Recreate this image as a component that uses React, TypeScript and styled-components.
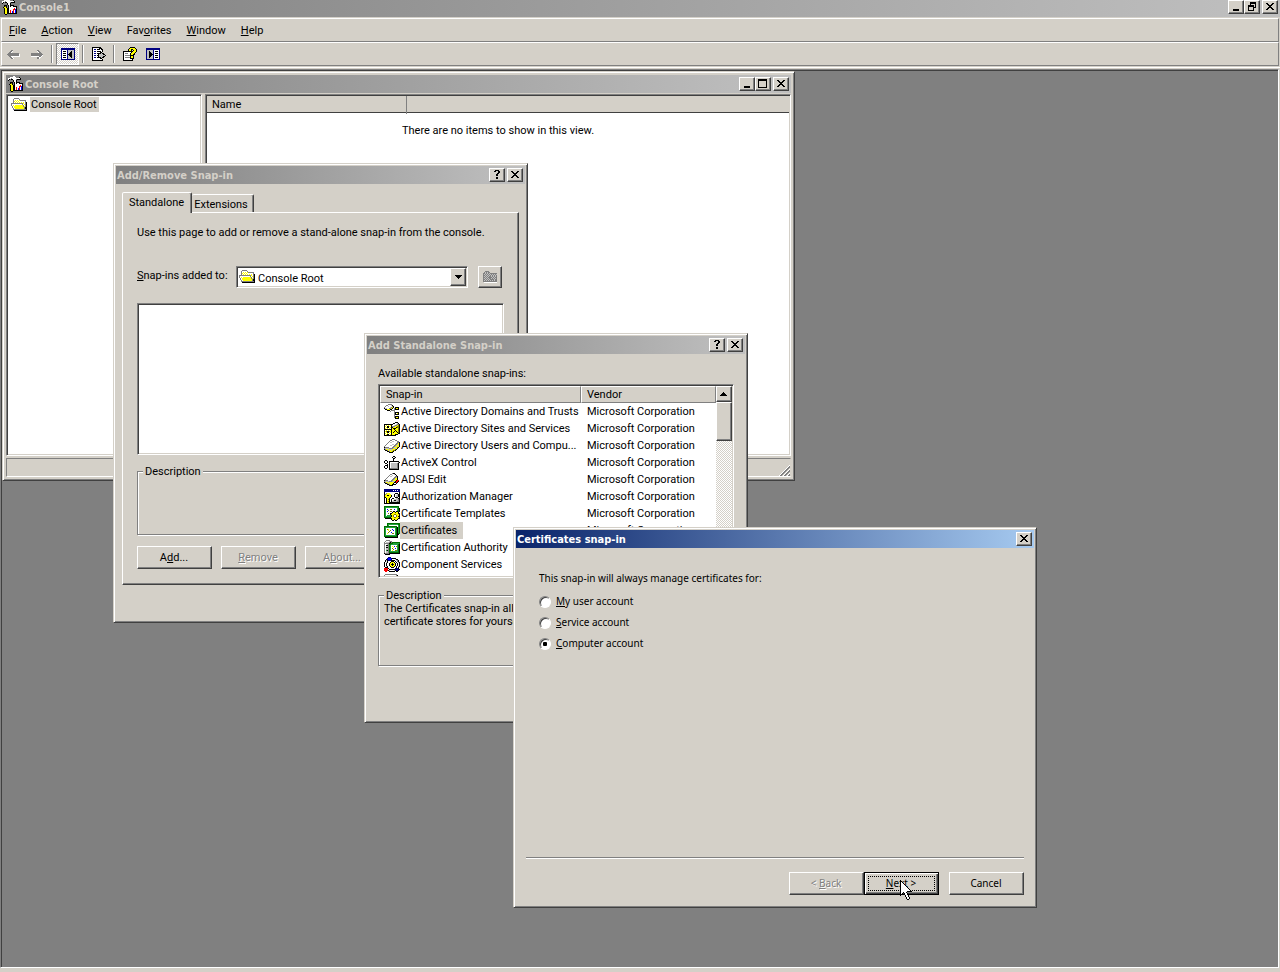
import React, { ReactNode } from 'react';
import styled, { createGlobalStyle, css } from 'styled-components';

const face = '#d4d0c8';
const light = '#ffffff';
const shadow = '#808080';
const dark = '#404040';
const uiFont = 'Roboto, "Liberation Sans", sans-serif';
const titleFont = '"DejaVu Sans Condensed", "DejaVu Sans", sans-serif';
const wizardFont = '"Noto Sans", "Liberation Sans", sans-serif';

const raised = css`
  border: 1px solid;
  border-color: ${light} ${dark} ${dark} ${light};
  box-shadow: inset -1px -1px ${shadow};
`;
const sunken = css`
  border: 1px solid;
  border-color: ${shadow} ${light} ${light} ${shadow};
  box-shadow: inset 1px 1px ${dark}, inset -1px -1px ${face};
  padding: 1px;
`;
const checker = css`
  background: repeating-conic-gradient(${light} 0 25%, ${face} 0 50%) 0 0 / 2px 2px;
`;

const GlobalStyle = createGlobalStyle`
  *, *::before, *::after { box-sizing: border-box; }
  body { margin: 0; background: ${face}; overflow: hidden; }
  body, button, select, input, table { font: 11px/13px ${uiFont}; color: #000; }
  button { padding: 0; }
  p { margin: 0; }
  svg { display: block; flex: none; }
`;

/* ---------- pixel icons ---------- */

const palette: Record<string, string> = {
  k: '#000000', g: '#808080', l: '#c0c0c0', w: '#ffffff', y: '#ffff00', o: '#808000',
  b: '#0000ff', n: '#000080', r: '#ff0000', m: '#800080', e: '#007000', f: '#20a040', t: '#404040',
};

function Pixels({ rows }: { rows: string[] }) {
  const width = Math.max(...rows.map((r) => r.length));
  return (
    <svg width={width} height={rows.length} shapeRendering="crispEdges" aria-hidden="true">
      {rows.flatMap((row, y) =>
        (row.match(/(.)\1*/g) ?? []).reduce<{ x: number; out: ReactNode[] }>(
          (acc, run) => {
            if (palette[run[0]]) {
              acc.out.push(<rect key={`${acc.x}-${y}`} x={acc.x} y={y} width={run.length} height={1} fill={palette[run[0]]} />);
            }
            return { x: acc.x + run.length, out: acc.out };
          },
          { x: 0, out: [] },
        ).out,
      )}
    </svg>
  );
}

const consoleIcon = [
  '...gggwwg.......',
  '.ggwwwwwwgggk...',
  'gwwwgwwwwwwwwk..',
  'gwk.kkwwwgkkkk..',
  '.k....kwwk......',
  '......kwwk......',
  '...kkk.kwkkkk...',
  '...kok.kwkwwkkkk',
  '..kyyk.kwwwwwwwk',
  '...kyykkwwwwwrwk',
  '...kyykkwwwwrrbk',
  '...kyykkwrwwrwbk',
  '...kyykkwrwbrwbk',
  '...kyykkwrwbrwbk',
  '...kyykkkkkkkkkk',
  '....kk..........',
];
const folderIcon = [
  '...ggggg........',
  '..gwwwwwg.......',
  '..gwywywygggggg.',
  '..gywywywwwwwwg.',
  '..gwywywywywywgk',
  'ggggggggggggywgk',
  'gwwwwwwwwwwgwygk',
  'gwywyyyyyyyygwgk',
  '.gwyyyyyyyyygygk',
  '.gwyyyyyyyyyygkk',
  '..gwyyyyyyyyygkk',
  '..gggggggggggggk',
  '...kkkkkkkkkkkkk',
];
const grayFolder = [
  '..gggg........',
  '.glglgg.......',
  'gglglglggggggg',
  'glglglglglglgl',
  'gglglglglglglg',
  'glglglgglglglg',
  'gglglgggglglgg',
  'glglglgglglglg',
  'gglglglgggglgg',
  'glglglglglglgg',
  'gggggggggggggg',
  '.wwwwwwwwwwwww',
];
const arrowLeft = [
  '....gg.......',
  '...ggw.......',
  '..ggw........',
  '.ggggggggggg.',
  'ggggggggggggw',
  '.gggggggggggw',
  '..ggwwwwwwwww',
  '...ggw.......',
  '....ggw......',
];
const arrowRight = [
  '.......gg....',
  '.......wgg...',
  '........wgg..',
  '.ggggggggggg.',
  '.gggggggggggg',
  '.gggggggggggw',
  '.wwwwwwwwggw.',
  '.......ggww..',
  '.......ggw...',
];
const treePaneIcon = [
  'nnnnnnnnnnnnnn',
  'nnnnnnnnnnnnnn',
  'nwwwwwnlllllln',
  'nwkkkwnlllklln',
  'nwwwwwnllkklln',
  'nwkkkwnlkkklln',
  'nwwwwwnkkkklln',
  'nwkkkwnlkkklln',
  'nwwwwwnllkklln',
  'nwkkkwnlllklln',
  'nwwwwwnlllllln',
  'nnnnnnnnnnnnnn',
];
const actionPaneIcon = [
  'nnnnnnnnnnnnnn',
  'nnnnnnnnnnnnnn',
  'nllllllnwwwwwn',
  'nllklllnwkkkwn',
  'nllkkllnwwwwwn',
  'nllkkklnwkkkwn',
  'nllkkkknwwwwwn',
  'nllkkklnwkkkwn',
  'nllkkllnwwwwwn',
  'nllklllnwkkkwn',
  'nllllllnwwwwwn',
  'nnnnnnnnnnnnnn',
];
const exportIcon = [
  'kkkkkkkkk.....',
  'kwwwwwwkkk....',
  'kwnnwkkkwkk...',
  'kwwwwwwwwwk...',
  'kwnnwkkkkwk...',
  'kwwwwwwwkk....',
  'kwnnwkkkklkk..',
  'kwwwwwkllllkk.',
  'kwnnwkkllllllk',
  'kwwwwwkllllkk.',
  'kwnnwkkkklkk..',
  'kwwwwwwwkk....',
  'kwwwwwwwwwk...',
  'kkkkkkkkkkk...',
];
const helpIcon = [
  '.......kkkkk..',
  '......kyyyyyk.',
  '.....kyykkyyyk',
  '.....kyyk.kyyk',
  'kkkkkkkkkkyyyk',
  'kwwwwwwwkyyyk.',
  'kwgggwwkyyyk..',
  'kwwwwwwkyykk..',
  'kwgggggkkkk...',
  'kwwwwwwkyyk...',
  'kwgggggkyyk...',
  'kwwwwwwkkkk...',
  'kwwwwwwwwk....',
  'kkkkkkkkkk....',
];
const trustIcon = [
  '....gggg........',
  '..ggwwwlk.......',
  '.gwwlwwwgk......',
  'gwwwwwlgyk.kkkk.',
  'kllwwggyk.gkyyk.',
  '.kkyyykk..gkkkk.',
  '...kkk.gggg.....',
  '......g...g.....',
  '..........gkkkk.',
  '..........gkwyk.',
  '..........gkkkk.',
  '..........g.....',
  '..........gkkkk.',
  '..........gkyyk.',
  '...........kkkk.',
];
const sitesIcon = [
  '...........kkk..',
  '.........kkwwlk.',
  'kkkkkkkkkwwwlggk',
  'kwywywykwwlggyok',
  'kywkkywkgggyyook',
  'kwykkwykkyyykook',
  'kywywywkykkkyyok',
  'kkkkkkkkyykyyyok',
  'kwywywykyyykyyok',
  'kyokkoykyykykyok',
  'kwykkwykykyyykok',
  'kywywywkyyyyyykk',
  'kwykkwykyyykkk..',
  'kkkkkkkkkkkk....',
];
const usersIcon = [
  '........ggg.....',
  '......ggwwwgg...',
  '.....gwwllwwwgg.',
  '....gwllwwwwwggk',
  '...gwwwwwwwwggyk',
  '..gwwwwwllwgglyk',
  '.gwwwwllwwggyylk',
  'gwwwwwwwwggllyyk',
  'kggggwwwggyyyok.',
  'gllllgggglllyk..',
  'kgyylyllyyyok...',
  '.kkgylylyook....',
  '...kkgyyok......',
  '.....kkkk.......',
];
const activexIcon = [
  '.........kk.....',
  '........kwlk....',
  '.........kk.....',
  '.........k......',
  '.kk......k......',
  'kwwk.kkkkkkkkkk.',
  'kwwk.kwwwwwwwwgk',
  '.kk..kwllllllgk.',
  '...k.kwllllllgk.',
  '.kkk.kwllllllgk.',
  'kwwk.kwllllllgk.',
  'kwwk.kwllllllgk.',
  '.kk..kggggggggk.',
  '.....kkkkkkkkkk.',
];
const adsiIcon = [
  '........gkk.....',
  '......ggwwlk....',
  '.....gwwlwwwk...',
  '....gwllwwwggk..',
  '...gwwwwwwgglk..',
  '..gwwwwwwggyyk..',
  '.gwwwwwwgglyyk..',
  'kgggwwwggyyykrr.',
  'gllllggglllkrrk.',
  'kgyylyyyyykkrk..',
  '.kkgylyyykwwk...',
  '...kkgyykkkk....',
  '.....kkkk.......',
];
const authIcon = [
  'nnnnnnnnnnnnnnnn',
  'nnnnnnnnnwnwnwnn',
  'nnnnnnnnnnnnnnnn',
  'kwwwwwwwwwwwwwwk',
  'kwgyyywwwwwkkkwk',
  'kgyyyyywwwkwwlkk',
  'kyykkyykwwkwllkk',
  'kyyyyyykwwkwllkk',
  'kkyyyykwwwwkkkwk',
  'kwkyykwwkkwwllkk',
  'kwkyokwkwwllllgk',
  'kwkyykwkwlkkllgk',
  'kwkyokwklllllggk',
  'kwkyykkkkkkkkkkk',
  'kkkkkkkkkkkkkkkk',
];
const templateIcon = [
  'eeeeeeeeeeeeeee.',
  'efffffffffffffe.',
  'efwwwwwwwwwwwfek',
  'efwbwwoowwbwwfek',
  'efwwowwwwwwwwfek',
  'efwbwwoowkkwkkek',
  'efwwwwwwkyykyyk.',
  'efwwowkkyyyyyykk',
  'efwwwwkyyyooyyyk',
  'efwffffkyowwoyyk',
  'effffffkyowwoykk',
  'eeeeeekyyyooyyyk',
  '.kkkkkkkyyyyyykk',
  '.......kyykyyk..',
  '........kk.kk...',
];
const certIcon = [
  '...eeeeeeeeeeeee',
  '...effffffffffee',
  '...efwwwwwwwwwfe',
  'eeeeeeeeeeeeewfe',
  'efffffffffffekfe',
  'efwwwwwwwwwfekfe',
  'efwoywwwbwwfekfe',
  'efwwywowwbwfekfe',
  'efwwwowwwwwfekfe',
  'efwwowwbwwwfekfe',
  'efwywwwwoowfekee',
  'efwwwwwwwwwfekk.',
  'efffffffffffek..',
  'eeeeeeeeeeeeek..',
  '.kkkkkkkkkkkkk..',
];
const authorityIcon = [
  '..gggg..........',
  '.gwwwlgg........',
  'gwlllgkgeeeeeeee',
  'gggggkeeeffffffe',
  'gwwlgeefffffffek',
  'gwkkgefwwwwwwfek',
  'gwllgefwywbwofek',
  'gwkkgefwwywwwfek',
  'gwllgefwowwbwfek',
  'gwllgefwwowwwfek',
  'gwfkgefwywwoofek',
  'gwllgeffffffffek',
  'gwllgeeeeeeeeeek',
  'kggggkkkkkkkkkkk',
  '.kkkkk..........',
];
const componentIcon = [
  '....nnn.........',
  '...nbbbnkkkk....',
  '..knbbbnwwwlkk..',
  '.klknnnkkkkwlgk.',
  '.kwk...kkk.kwgk.',
  'kwlk..kyyyk.kwgk',
  'kwk..kyykyyk.kwk',
  'kwk..kykkkyk.kwk',
  'kwk..kyykyyk.kwk',
  'kwlk..kyyyk.kwgk',
  '.kkk...kkk..kwk.',
  'rrrrk......knnk.',
  'rrrrwkkkkkknnnnk',
  'rrrrklwwwwlknnk.',
  '.rr..kkkkkk.kk..',
];
const computerIcon = [
  '.gggggggggggg...',
  'gwwwwwwwwwwwgk..',
  'gwllllllllllgk..',
  'gwlkkkkkkkklgk..',
  'gwlknnnnnnklgk..',
  'gwlknnnnnnklgk..',
  'gwlknnnnnnklgk..',
  'gwlkkkkkkkklgk..',
  'gwllllllllllgk..',
  'gggggggggggggk..',
  '.kkkkkkkkkkkkk..',
  '.gwwwwwwwwwwwgk.',
  'gwllllllllllllgk',
  'ggggggggggggggkk',
  'kkkkkkkkkkkkkkk.',
];
const upGlyph = ['...k...', '..kkk..', '.kkkkk.', 'kkkkkkk'];
const downGlyph = ['kkkkkkk', '.kkkkk.', '..kkk..', '...k...'];
const closeGlyph = ['kk....kk', '.kk..kk.', '..kkkk..', '...kk...', '..kkkk..', '.kk..kk.', 'kk....kk'];
const minGlyph = ['......', '......', '......', '......', '......', '......', 'kkkkkk', 'kkkkkk'];
const maxGlyph = ['kkkkkkkkk', 'kkkkkkkkk', 'k.......k', 'k.......k', 'k.......k', 'k.......k', 'k.......k', 'k.......k', 'kkkkkkkkk'];
const restoreGlyph = ['..kkkkkk', '..kkkkkk', '..k....k', 'kkkkkk.k', 'kkkkkk.k', 'k....kkk', 'k....k..', 'k....k..', 'kkkkkk..'];
const helpGlyph = ['.kkkk.', 'kk..kk', '....kk', '...kk.', '..kk..', '..kk..', '......', '..kk..', '..kk..'];
const gripGlyph = [
  '...........w',
  '..........wg',
  '.........wgg',
  '........wgg.',
  '.......wgg.w',
  '......wgg.wg',
  '.....wgg.wgg',
  '....wgg.wgg.',
  '...wgg.wgg.w',
  '..wgg.wgg.wg',
  '.wgg.wgg.wgg',
];
const cursorGlyph = [
  'k...........',
  'kk..........',
  'kwk.........',
  'kwwk........',
  'kwwwk.......',
  'kwwwwk......',
  'kwwwwwk.....',
  'kwwwwwwk....',
  'kwwwwwwwk...',
  'kwwwwwwwwk..',
  'kwwwwwwwwwk.',
  'kwwwwwwkkkkk',
  'kwwkwwk.....',
  'kwk.kwwk....',
  'kk..kwwk....',
  'k....kwwk...',
  '.....kwwk...',
  '......kwwk..',
  '......kwwk..',
  '.......kk...',
];

/* ---------- shared parts ---------- */

const CaptionBar = styled.header<{ $active?: boolean }>`
  display: flex;
  align-items: center;
  height: 18px;
  flex: none;
  padding: 0 2px 0 1px;
  gap: 2px;
  font: bold 11px/14px ${titleFont};
  color: ${(p) => (p.$active ? '#fff' : face)};
  background: ${(p) =>
    p.$active ? 'linear-gradient(90deg, #0a246a, #a6caf0)' : `linear-gradient(90deg, ${shadow}, #c0c0c0)`};
`;
const CaptionText = styled.h2`
  flex: 1;
  margin: 0;
  padding-top: 2px;
  font: inherit;
  white-space: nowrap;
`;
const CaptionButtons = styled.div`
  display: flex;
`;
const CaptionButton = styled.button<{ $gap?: boolean }>`
  ${raised}
  display: flex;
  align-items: center;
  justify-content: center;
  width: 16px;
  height: 14px;
  padding: 0 1px 1px 0;
  margin-left: ${(p) => (p.$gap ? 2 : 0)}px;
  background: ${face};
`;

type Glyph = 'min' | 'max' | 'restore' | 'help' | 'close';
const glyphs: Record<Glyph, string[]> = { min: minGlyph, max: maxGlyph, restore: restoreGlyph, help: helpGlyph, close: closeGlyph };
const glyphLabels: Record<Glyph, string> = { min: 'Minimize', max: 'Maximize', restore: 'Restore', help: 'Help', close: 'Close' };

function Caption({ title, icon, active, controls }: { title: string; icon?: string[]; active?: boolean; controls: Glyph[] }) {
  return (
    <CaptionBar $active={active}>
      {icon && <Pixels rows={icon} />}
      <CaptionText>{title}</CaptionText>
      <CaptionButtons>
        {controls.map((c) => (
          <CaptionButton key={c} type="button" aria-label={glyphLabels[c]} $gap={c === 'close'}>
            <Pixels rows={glyphs[c]} />
          </CaptionButton>
        ))}
      </CaptionButtons>
    </CaptionBar>
  );
}

const Frame = styled.section<{ $x: number; $y: number; $w: number; $h: number; $thick?: boolean }>`
  position: absolute;
  left: ${(p) => p.$x}px;
  top: ${(p) => p.$y}px;
  width: ${(p) => p.$w}px;
  height: ${(p) => p.$h}px;
  display: flex;
  flex-direction: column;
  padding: ${(p) => (p.$thick ? 3 : 2)}px;
  background: ${face};
  border: 1px solid;
  border-color: ${face} ${dark} ${dark} ${face};
  box-shadow: inset 1px 1px ${light}, inset -1px -1px ${shadow};
`;

const Button = styled.button<{ $default?: boolean }>`
  ${raised}
  flex: none;
  width: 75px;
  height: 23px;
  padding: 0 1px 1px 0;
  background: ${face};
  font: inherit;
  white-space: nowrap;
  &:disabled {
    color: ${shadow};
    text-shadow: 1px 1px ${light};
  }
  ${(p) =>
    p.$default &&
    css`
      border-color: #000;
      box-shadow: inset 1px 1px ${light}, inset -1px -1px ${dark}, inset -2px -2px ${shadow};
      outline: 1px dotted #000;
      outline-offset: -5px;
    `}
`;
const Group = styled.fieldset<{ $h: number }>`
  min-width: 0;
  height: ${(p) => p.$h}px;
  margin: 0;
  padding: 0 5px;
  border: 1px solid ${shadow};
  box-shadow: 1px 1px ${light}, inset 1px 1px ${light};
  legend {
    padding: 0 2px;
    background: ${face};
  }
`;

/* ---------- main window ---------- */

const Shell = styled.main`
  display: flex;
  flex-direction: column;
  height: 100vh;
  min-height: 600px;
  background: ${face};
`;
const TopCaption = styled.div`
  height: 17px;
  overflow: hidden;
  display: flex;
  flex-direction: column;
  justify-content: flex-end;
  padding-bottom: 1px;
  background: linear-gradient(90deg, ${shadow}, #c0c0c0);
`;
const Band = styled.div<{ $h: number }>`
  display: flex;
  align-items: center;
  height: ${(p) => p.$h}px;
  margin: 0 1px;
  border: 1px solid;
  border-color: ${light} ${shadow} ${shadow} ${light};
`;
const MenuBar = styled(Band).attrs({ as: 'nav' })`
  margin-top: 1px;
`;
const MenuItem = styled.button`
  height: 19px;
  padding: 0 7px;
  margin-right: 1px;
  border: 0;
  background: none;
  font-size: 11px;
`;
const ToolButton = styled.button<{ $pressed?: boolean }>`
  display: flex;
  align-items: center;
  justify-content: center;
  width: 23px;
  height: 22px;
  border: 1px solid transparent;
  background: none;
  ${(p) =>
    p.$pressed &&
    css`
      ${checker}
      border-color: ${shadow} ${light} ${light} ${shadow};
    `}
`;
const ToolDivider = styled.span`
  width: 2px;
  height: 18px;
  margin: 0 3px;
  border-left: 1px solid ${shadow};
  border-right: 1px solid ${light};
`;
const Desktop = styled.div`
  position: relative;
  flex: 1;
  min-height: 0;
  margin: 1px 1px 4px 0;
  border: 1px solid;
  border-color: ${shadow} ${light} ${light} ${shadow};
  box-shadow: inset 1px 1px ${dark};
  background: ${shadow};
`;
const DesktopEdge = styled.div`
  display: flex;
  flex-direction: column;
  flex: 1;
  min-height: 0;
  margin-top: 1px;
  border-top: 1px solid ${light};
`;

/* ---------- console child window ---------- */

const Panes = styled.div`
  display: grid;
  grid-template-columns: 196px 1fr;
  gap: 3px;
  flex: 1;
  min-height: 0;
  margin-top: 1px;
`;
const Pane = styled.div`
  ${sunken}
  display: flex;
  flex-direction: column;
  background: #fff;
`;
const TreeItem = styled.div`
  display: flex;
  align-items: center;
  gap: 3px;
  padding-left: 3px;
  margin-top: 1px;
  span {
    padding: 1px 2px 1px 1px;
    background: ${face};
  }
`;
const NameHeader = styled.div`
  display: grid;
  grid-template-columns: 200px 1fr;
  height: 17px;
  flex: none;
  border-bottom: 1px solid ${dark};
  background: ${face};
  line-height: 18px;
  span {
    padding-left: 5px;
    border-right: 1px solid ${shadow};
  }
`;
const EmptyNote = styled.p`
  margin-top: 11px;
  text-align: center;
`;
const StatusBar = styled.div`
  display: flex;
  justify-content: flex-end;
  align-items: flex-end;
  height: 19px;
  margin-top: 2px;
  border: 1px solid;
  border-color: ${shadow} ${face} ${light} ${shadow};
`;

function ConsoleWindow() {
  return (
    <Frame $x={1} $y={1} $w={793} $h={410} $thick>
      <Caption title="Console Root" icon={consoleIcon} controls={['min', 'max', 'close']} />
      <Panes>
        <Pane>
          <TreeItem>
            <Pixels rows={folderIcon} />
            <span>Console Root</span>
          </TreeItem>
        </Pane>
        <Pane>
          <NameHeader>
            <span>Name</span>
          </NameHeader>
          <EmptyNote>There are no items to show in this view.</EmptyNote>
        </Pane>
      </Panes>
      <StatusBar>
        <Pixels rows={gripGlyph} />
      </StatusBar>
    </Frame>
  );
}

/* ---------- add/remove dialog ---------- */

const TabArea = styled.div`
  display: flex;
  flex-direction: column;
  flex: 1;
  margin: 8px 6px 0;
`;
const Tabs = styled.div`
  display: flex;
  align-items: flex-end;
  height: 20px;
`;
const Tab = styled.button<{ $selected?: boolean }>`
  position: relative;
  height: ${(p) => (p.$selected ? 21 : 18)}px;
  width: ${(p) => (p.$selected ? 70 : 62)}px;
  margin-bottom: ${(p) => (p.$selected ? -1 : 0)}px;
  padding: ${(p) => (p.$selected ? '0 1px 1px 0' : '1px 3px 0 0')};
  z-index: ${(p) => (p.$selected ? 1 : 0)};
  background: ${face};
  border: 1px solid;
  border-color: ${light} ${dark} transparent ${light};
  border-width: 1px 1px 0;
  border-left-width: ${(p) => (p.$selected ? 1 : 0)}px;
  border-radius: 2px 2px 0 0;
  box-shadow: inset -1px 0 ${shadow};
`;
const TabPanel = styled.div`
  ${raised}
  width: 397px;
  height: 373px;
  padding: 13px 14px 0;
  display: flex;
  flex-direction: column;
`;
const ScopeRow = styled.div`
  display: flex;
  align-items: center;
  height: 22px;
  margin-top: 27px;
  label {
    width: 99px;
    padding-bottom: 3px;
  }
`;
const SelectBox = styled.div`
  ${sunken}
  position: relative;
  width: 232px;
  height: 22px;
  background: #fff;
  select {
    appearance: none;
    display: block;
    width: 100%;
    height: 100%;
    padding: 2px 18px 0 20px;
    border: 0;
    background: none;
    font-size: 11px;
  }
`;
const SelectIcon = styled.span`
  position: absolute;
  left: 2px;
  top: 3px;
  pointer-events: none;
`;
const SelectArrow = styled.span`
  ${raised}
  position: absolute;
  right: 1px;
  top: 1px;
  width: 16px;
  height: 18px;
  display: flex;
  align-items: center;
  justify-content: center;
  background: ${face};
  pointer-events: none;
`;
const FolderButton = styled(Button)`
  display: flex;
  align-items: center;
  justify-content: center;
  width: 24px;
  height: 22px;
  margin-left: 10px;
`;
const SnapinList = styled.div`
  ${sunken}
  height: 152px;
  margin: 15px 0 10px;
  background: #fff;
`;
const ButtonRow = styled.div<{ $gap: number }>`
  display: flex;
  gap: ${(p) => p.$gap}px;
`;
const TabButtons = styled(ButtonRow)`
  margin-top: 11px;
`;
const DialogFooter = styled(ButtonRow)`
  justify-content: flex-end;
  padding: 0 5px 8px;
`;

function AddRemoveDialog() {
  return (
    <Frame $x={112} $y={93} $w={415} $h={460}>
      <Caption title="Add/Remove Snap-in" controls={['help', 'close']} />
      <TabArea>
        <Tabs role="tablist">
          <Tab type="button" role="tab" aria-selected $selected>Standalone</Tab>
          <Tab type="button" role="tab">Extensions</Tab>
        </Tabs>
        <TabPanel>
          <p>Use this page to add or remove a stand-alone snap-in from the console.</p>
          <ScopeRow>
            <label htmlFor="scope"><u>S</u>nap-ins added to:</label>
            <SelectBox>
              <select id="scope">
                <option>Console Root</option>
              </select>
              <SelectIcon><Pixels rows={folderIcon} /></SelectIcon>
              <SelectArrow><Pixels rows={downGlyph} /></SelectArrow>
            </SelectBox>
            <FolderButton type="button" aria-label="Up one level"><Pixels rows={grayFolder} /></FolderButton>
          </ScopeRow>
          <SnapinList />
          <Group $h={70}>
            <legend>Description</legend>
          </Group>
          <TabButtons $gap={9}>
            <Button type="button">A<u>d</u>d...</Button>
            <Button type="button" disabled><u>R</u>emove</Button>
            <Button type="button" disabled>A<u>b</u>out...</Button>
          </TabButtons>
        </TabPanel>
      </TabArea>
      <DialogFooter $gap={6}>
        <Button type="button">OK</Button>
        <Button type="button">Cancel</Button>
      </DialogFooter>
    </Frame>
  );
}

/* ---------- add standalone dialog ---------- */

const StandaloneBody = styled.div`
  display: flex;
  flex-direction: column;
  padding: 13px 11px 0;
`;
const ListBox = styled.div`
  ${sunken}
  display: grid;
  grid-template-columns: 1fr 16px;
  height: 194px;
  margin: 4px 0 11px;
  background: #fff;
`;
const ListView = styled.div`
  overflow: hidden;
`;
const Table = styled.table`
  width: 100%;
  table-layout: fixed;
  border-collapse: separate;
  border-spacing: 0;
  th {
    height: 17px;
    padding: 0 5px;
    text-align: left;
    font-weight: normal;
    background: ${face};
    border: 1px solid;
    border-color: ${light} ${shadow} ${shadow} ${light};
  }
  td {
    height: 17px;
    padding: 0 6px;
    white-space: nowrap;
  }
  th:first-child {
    width: 201px;
  }
  td:first-child {
    padding: 0 0 0 4px;
  }
`;
const SnapinName = styled.span<{ $selected?: boolean }>`
  display: flex;
  align-items: center;
  height: 17px;
  span {
    padding: 2px 6px 2px 1px;
    background: ${(p) => (p.$selected ? face : 'none')};
  }
`;
const ScrollTrack = styled.div`
  ${checker}
  display: flex;
  flex-direction: column;
`;
const ScrollButton = styled(CaptionButton)`
  height: 16px;
`;
const ScrollThumb = styled.div`
  ${raised}
  height: 39px;
  background: ${face};
`;

const snapins: { name: string; icon: string[]; selected?: boolean }[] = [
  { name: 'Active Directory Domains and Trusts', icon: trustIcon },
  { name: 'Active Directory Sites and Services', icon: sitesIcon },
  { name: 'Active Directory Users and Compu...', icon: usersIcon },
  { name: 'ActiveX Control', icon: activexIcon },
  { name: 'ADSI Edit', icon: adsiIcon },
  { name: 'Authorization Manager', icon: authIcon },
  { name: 'Certificate Templates', icon: templateIcon },
  { name: 'Certificates', icon: certIcon, selected: true },
  { name: 'Certification Authority', icon: authorityIcon },
  { name: 'Component Services', icon: componentIcon },
];

function AddStandaloneDialog() {
  return (
    <Frame $x={363} $y={263} $w={384} $h={390}>
      <Caption title="Add Standalone Snap-in" controls={['help', 'close']} />
      <StandaloneBody>
        <p>Available standalone snap-ins:</p>
        <ListBox>
          <ListView>
            <Table>
              <thead>
                <tr>
                  <th>Snap-in</th>
                  <th>Vendor</th>
                </tr>
              </thead>
              <tbody>
                {snapins.map((s) => (
                  <tr key={s.name}>
                    <td>
                      <SnapinName $selected={s.selected}>
                        <Pixels rows={s.icon} />
                        <span>{s.name}</span>
                      </SnapinName>
                    </td>
                    <td>Microsoft Corporation</td>
                  </tr>
                ))}
                <tr>
                  <td><SnapinName><Pixels rows={computerIcon} /></SnapinName></td>
                  <td />
                </tr>
              </tbody>
            </Table>
          </ListView>
          <ScrollTrack>
            <ScrollButton type="button" aria-label="Scroll up"><Pixels rows={upGlyph} /></ScrollButton>
            <ScrollThumb />
          </ScrollTrack>
        </ListBox>
        <Group $h={77}>
          <legend>Description</legend>
          <p>The Certificates snap-in allows you to browse the contents of the certificate stores for yourself, a service, or a computer.</p>
        </Group>
      </StandaloneBody>
    </Frame>
  );
}

/* ---------- certificates wizard ---------- */

const WizardBody = styled.form`
  display: flex;
  flex-direction: column;
  flex: 1;
  padding: 24px 10px 10px;
  font: 10px/13px ${wizardFont};
`;
const Choices = styled.div`
  display: flex;
  flex-direction: column;
  flex: 1;
  padding-left: 13px;
`;
const Choice = styled.label`
  display: flex;
  align-items: center;
  height: 21px;
  gap: 5px;
`;
const ChoicesText = styled.p`
  margin-bottom: 6px;
`;
const Radio = styled.input`
  appearance: none;
  width: 12px;
  height: 12px;
  margin: 0;
  display: grid;
  place-items: center;
  border: 1px solid;
  border-color: ${shadow} ${light} ${light} ${shadow};
  border-radius: 50%;
  background: #fff;
  box-shadow: inset 1px 1px ${dark};
  &:checked::after {
    content: '';
    width: 4px;
    height: 4px;
    border-radius: 1px;
    background: #000;
  }
`;
const Rule = styled.hr`
  width: 100%;
  height: 2px;
  margin: 0 0 13px;
  border: 0;
  border-top: 1px solid ${shadow};
  border-bottom: 1px solid ${light};
`;
const WizardButtons = styled(ButtonRow)`
  justify-content: flex-end;
`;
const WizardCancel = styled(Button)`
  margin-left: 10px;
`;
const Pointer = styled.div`
  position: absolute;
  left: 899px;
  top: 810px;
  pointer-events: none;
`;

function CertificatesWizard() {
  return (
    <Frame $x={512} $y={457} $w={524} $h={381}>
      <Caption title="Certificates snap-in" active controls={['close']} />
      <WizardBody>
        <Choices>
          <ChoicesText>This snap-in will always manage certificates for:</ChoicesText>
          <Choice><Radio type="radio" name="account" /><span><u>M</u>y user account</span></Choice>
          <Choice><Radio type="radio" name="account" /><span><u>S</u>ervice account</span></Choice>
          <Choice><Radio type="radio" name="account" defaultChecked /><span><u>C</u>omputer account</span></Choice>
        </Choices>
        <Rule />
        <WizardButtons $gap={0}>
          <Button type="button" disabled>&lt; <u>B</u>ack</Button>
          <Button type="button" $default><u>N</u>ext &gt;</Button>
          <WizardCancel type="button">Cancel</WizardCancel>
        </WizardButtons>
      </WizardBody>
    </Frame>
  );
}

export default function App() {
  return (
    <>
      <GlobalStyle />
      <Shell>
        <TopCaption>
          <Caption title="Console1" icon={consoleIcon} controls={['min', 'restore', 'close']} />
        </TopCaption>
        <MenuBar $h={24}>
          <MenuItem type="button"><u>F</u>ile</MenuItem>
          <MenuItem type="button"><u>A</u>ction</MenuItem>
          <MenuItem type="button"><u>V</u>iew</MenuItem>
          <MenuItem type="button">Fav<u>o</u>rites</MenuItem>
          <MenuItem type="button"><u>W</u>indow</MenuItem>
          <MenuItem type="button"><u>H</u>elp</MenuItem>
        </MenuBar>
        <Band $h={24}>
          <ToolButton type="button" aria-label="Back"><Pixels rows={arrowLeft} /></ToolButton>
          <ToolButton type="button" aria-label="Forward"><Pixels rows={arrowRight} /></ToolButton>
          <ToolDivider />
          <ToolButton type="button" aria-label="Show/Hide Console Tree" $pressed><Pixels rows={treePaneIcon} /></ToolButton>
          <ToolDivider />
          <ToolButton type="button" aria-label="Export List"><Pixels rows={exportIcon} /></ToolButton>
          <ToolDivider />
          <ToolButton type="button" aria-label="Help"><Pixels rows={helpIcon} /></ToolButton>
          <ToolButton type="button" aria-label="Show/Hide Action Pane"><Pixels rows={actionPaneIcon} /></ToolButton>
        </Band>
        <DesktopEdge>
          <Desktop>
            <ConsoleWindow />
            <AddRemoveDialog />
            <AddStandaloneDialog />
            <CertificatesWizard />
            <Pointer><Pixels rows={cursorGlyph} /></Pointer>
          </Desktop>
        </DesktopEdge>
      </Shell>
    </>
  );
}
